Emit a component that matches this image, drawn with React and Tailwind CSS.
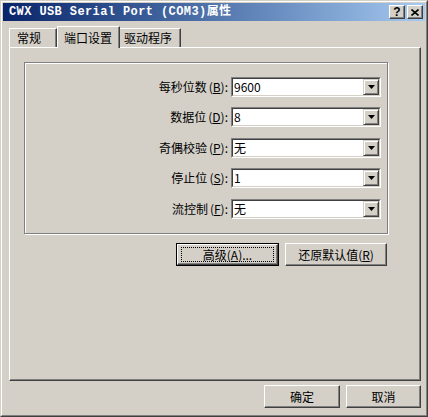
import React from "react";

const font = { fontFamily: '"Noto Sans CJK SC", "Liberation Sans", sans-serif' };

const rows = [
  { label: "每秒位数", key: "B", value: "9600", mt: "mt-[14px]" },
  { label: "数据位", key: "D", value: "8", mt: "mt-[10px]" },
  { label: "奇偶校验", key: "P", value: "无", mt: "mt-[11px]" },
  { label: "停止位", key: "S", value: "1", mt: "mt-[10px]" },
  { label: "流控制", key: "F", value: "无", mt: "mt-[11px]" },
];

const Combo = ({ value }) => (
  <div className="ml-[3px] flex h-[20px] w-[150px] border border-t-[#808080] border-l-[#808080] border-r-white border-b-white">
    <div className="flex flex-1 border border-t-[#404040] border-l-[#404040] border-r-[#d4d0c8] border-b-[#d4d0c8] bg-white">
      <span className="flex-1 pl-[1px] text-[12px] leading-[16px] text-black">{value}</span>
      <div className="flex w-[16px] items-center justify-center border border-t-[#d4d0c8] border-l-[#d4d0c8] border-r-[#404040] border-b-[#404040] bg-[#d4d0c8] shadow-[inset_1px_1px_0_#fff,inset_-1px_-1px_0_#808080]">
        <svg width="7" height="4" viewBox="0 0 7 4">
          <path d="M0 0h7L3.5 4z" fill="#000" />
        </svg>
      </div>
    </div>
  </div>
);

const Button = ({ children, w, focused }) =>
  focused ? (
    <div className={`${w} h-[23px] border border-black`}>
      <div className="flex h-full w-full items-center justify-center border border-t-white border-l-white border-r-[#404040] border-b-[#404040] shadow-[inset_-1px_-1px_0_#808080]">
        <div className="flex h-[15px] w-[calc(100%-6px)] items-center justify-center border border-dotted border-black text-[12px] text-black">
          {children}
        </div>
      </div>
    </div>
  ) : (
    <div
      className={`${w} flex h-[23px] items-center justify-center border border-t-white border-l-white border-r-[#404040] border-b-[#404040] text-[12px] text-black shadow-[inset_-1px_-1px_0_#808080]`}
    >
      {children}
    </div>
  );

const CaptionButton = ({ children }) => (
  <div className="flex h-[14px] w-[16px] items-center justify-center border border-t-white border-l-white border-r-[#404040] border-b-[#404040] bg-[#d4d0c8] shadow-[inset_-1px_-1px_0_#808080]">
    {children}
  </div>
);

export default function App() {
  return (
    <div style={font} className="h-[417px] w-[428px] border border-t-[#d4d0c8] border-l-[#d4d0c8] border-r-[#404040] border-b-[#404040] bg-[#d4d0c8]">
      <div className="flex h-full flex-col border border-t-white border-l-white border-r-[#808080] border-b-[#808080] p-[1px]">
        {/* title bar */}
        <div className="flex h-[18px] items-center bg-gradient-to-r from-[#0a246a] to-[#a6caf0] pl-[6px] pr-[2px]">
          <span
            style={{ fontFamily: '"Liberation Mono", "Noto Sans CJK SC", monospace' }}
            className="flex-1 text-[12px] font-bold leading-none tracking-[0.4px] text-white"
          >
            CWX USB Serial Port (COM3)属性
          </span>
          <div className="flex gap-[2px]">
            <CaptionButton>
              <span className="text-[12px] font-bold leading-none text-black" style={{ fontFamily: '"Liberation Sans", sans-serif' }}>
                ?
              </span>
            </CaptionButton>
            <CaptionButton>
              <svg width="8" height="7" viewBox="0 0 8 7">
                <path d="M0.5 0.5L7.5 6.5M7.5 0.5L0.5 6.5" stroke="#000" strokeWidth="1.6" />
              </svg>
            </CaptionButton>
          </div>
        </div>

        <div className="flex flex-1 flex-col pl-[6px] pr-[4px]">
          {/* tabs */}
          <div className="mt-[5px] flex h-[21px] items-end">
            <div className="flex h-[19px] w-[48px] items-center border-l border-t border-r border-l-white border-t-white border-r-[#404040] pl-[7px] text-[12px] text-black shadow-[inset_-1px_0_0_#808080]">
              常规
            </div>
            <div className="relative z-10 -mb-[1px] flex h-[22px] w-[63px] items-center border-l border-t border-r border-l-white border-t-white border-r-[#404040] bg-[#d4d0c8] pl-[6px] text-[12px] text-black shadow-[inset_-1px_0_0_#808080]">
              端口设置
            </div>
            <div className="flex h-[19px] w-[61px] items-center border-t border-r border-t-white border-r-[#404040] pl-[4px] text-[12px] text-black shadow-[inset_-1px_0_0_#808080]">
              驱动程序
            </div>
          </div>

          {/* tab panel */}
          <div className="flex h-[334px] w-[412px] flex-col border border-t-white border-l-white border-r-[#404040] border-b-[#404040] pl-[14px] pt-[14px] shadow-[inset_-1px_-1px_0_#808080]">
            <div className="flex h-[172px] w-[364px] flex-col border border-[#808080] pr-[6px] shadow-[inset_1px_1px_0_#fff,1px_1px_0_#fff]">
              {rows.map((r) => (
                <div key={r.key} className={`${r.mt} flex items-center justify-end`}>
                  <span className="text-[12px] text-black">
                    {r.label}
                    <span className="ml-[2px]">(</span>
                    <span className="underline">{r.key}</span>):
                  </span>
                  <Combo value={r.value} />
                </div>
              ))}
            </div>
            <div className="mt-[9px] flex w-[363px] justify-end gap-[6px]">
              <Button w="w-[103px]" focused>
                高级(<span className="underline">A</span>)...
              </Button>
              <Button w="w-[102px]">
                还原默认值(<span className="underline">R</span>)
              </Button>
            </div>
          </div>

          {/* bottom buttons */}
          <div className="mt-[4px] flex w-[412px] justify-end gap-[6px]">
            <Button w="w-[76px]">确定</Button>
            <Button w="w-[75px]">取消</Button>
          </div>
        </div>
      </div>
    </div>
  );
}
